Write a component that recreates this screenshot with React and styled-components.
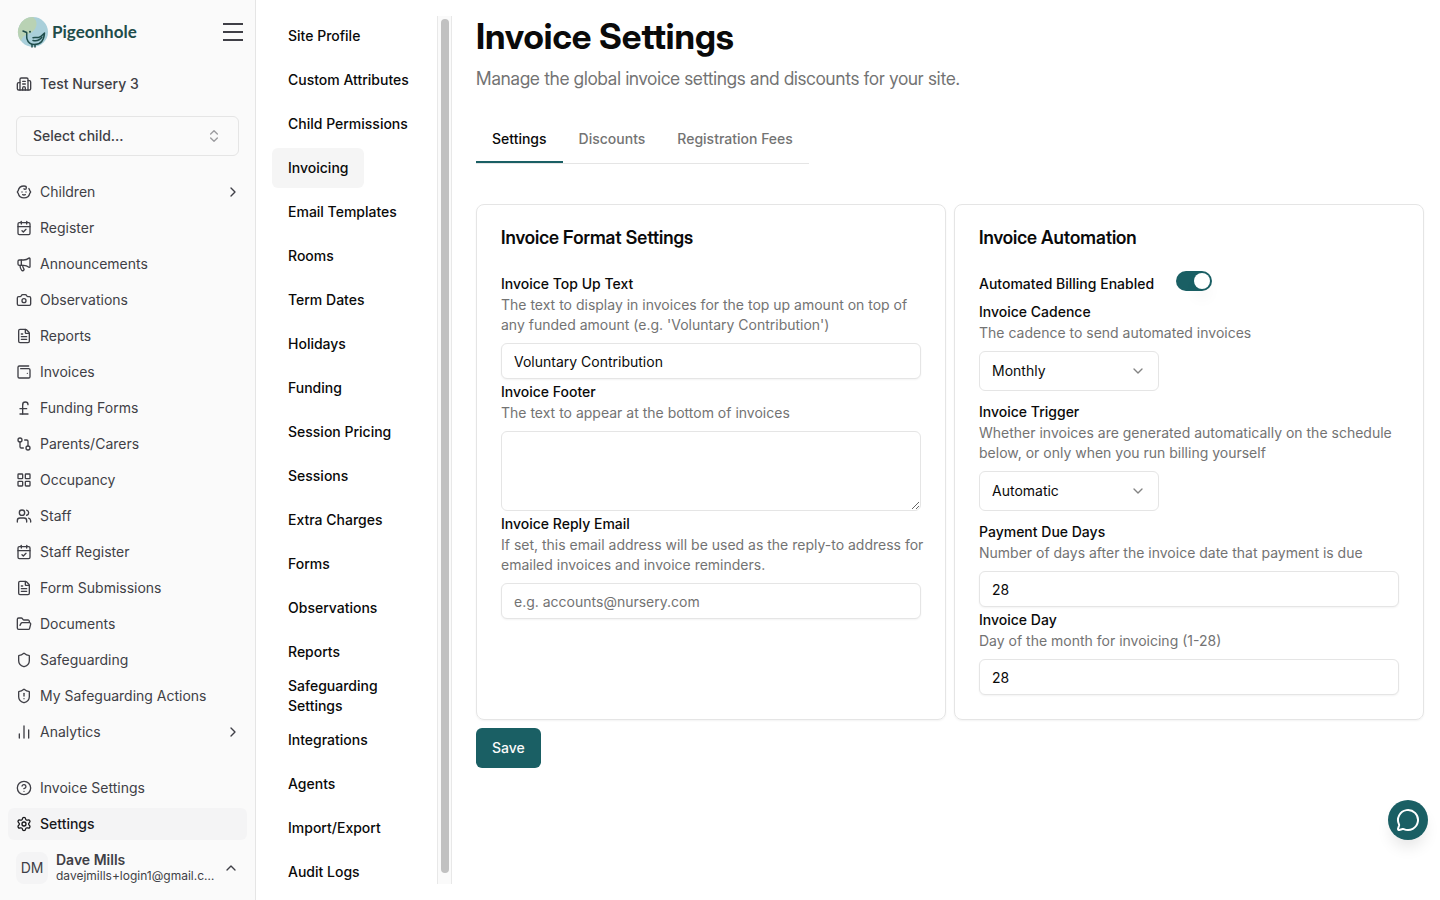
import React from "react";
import styled, { createGlobalStyle } from "styled-components";
import {
  Baby,
  Building2,
  CalendarCheck,
  Camera,
  ChartNoAxesColumn,
  ChevronDown,
  ChevronRight,
  ChevronUp,
  ChevronsUpDown,
  CircleHelp,
  FileText,
  FolderOpen,
  GitCompare,
  LayoutGrid,
  Megaphone,
  MessageCircle,
  PoundSterling,
  Settings,
  Shield,
  ShieldAlert,
  Users,
  WalletMinimal,
} from "lucide-react";

const navItems = [
  { label: "Children", icon: Baby, nested: true },
  { label: "Register", icon: CalendarCheck },
  { label: "Announcements", icon: Megaphone },
  { label: "Observations", icon: Camera },
  { label: "Reports", icon: FileText },
  { label: "Invoices", icon: WalletMinimal },
  { label: "Funding Forms", icon: PoundSterling },
  { label: "Parents/Carers", icon: GitCompare },
  { label: "Occupancy", icon: LayoutGrid },
  { label: "Staff", icon: Users },
  { label: "Staff Register", icon: CalendarCheck },
  { label: "Form Submissions", icon: FileText },
  { label: "Documents", icon: FolderOpen },
  { label: "Safeguarding", icon: Shield },
  { label: "My Safeguarding Actions", icon: ShieldAlert },
  { label: "Analytics", icon: ChartNoAxesColumn, nested: true },
];

const footerItems = [
  { label: "Invoice Settings", icon: CircleHelp },
  { label: "Settings", icon: Settings, active: true },
];

const settingsPages = [
  "Site Profile",
  "Custom Attributes",
  "Child Permissions",
  "Invoicing",
  "Email Templates",
  "Rooms",
  "Term Dates",
  "Holidays",
  "Funding",
  "Session Pricing",
  "Sessions",
  "Extra Charges",
  "Forms",
  "Observations",
  "Reports",
  "Safeguarding Settings",
  "Integrations",
  "Agents",
  "Import/Export",
  "Audit Logs",
];

const tabs = ["Settings", "Discounts", "Registration Fees"];

const LogoMark = () => (
  <svg width="32" height="32" viewBox="0 0 32 32" fill="none" aria-hidden="true">
    <circle cx="17" cy="16" r="15" fill="#a9cfda" />
    <path
      d="M17 1A15 15 0 0 0 5 25c1-4 3-5.500 6-6.500 5-1.500 9-5 9.500-10 .3-3-1-5.500-3.500-7.500z"
      fill="#b9d2b4"
    />
    <g stroke="#1f4d4b" strokeWidth="1.500" strokeLinecap="round" strokeLinejoin="round">
      <path d="M7 15l3.700 1.500c.2 2-.3 4.500.3 6.500 1 3.500 3.800 5.500 7.500 5.500 6 0 9.500-4.500 10-11.500-2 1.500-3 4-6 4.500-2 .3-3.500-.2-5.500.2" />
      <path d="M17 24.500c3.500.8 7-.5 9-3.500" />
      <path d="M16 28.500V31M19 28.500V31" />
    </g>
    <circle cx="14" cy="15.700" r="1" fill="#1f4d4b" />
  </svg>
);

const MenuIcon = () => (
  <svg width="24" height="24" viewBox="0 0 24 24" stroke="currentColor" strokeWidth="2" aria-hidden="true">
    <path d="M2 4h20M2 12h20M2 20h20" />
  </svg>
);

const NavLink = ({ label, icon: Icon, nested, active }) => (
  <NavItem href="#" $active={active}>
    <Icon size={16} />
    <span>{label}</span>
    {nested && <ChevronRight size={16} />}
  </NavItem>
);

const Sidebar = () => (
  <SidebarPanel>
    <SidebarHeader>
      <LogoRow>
        <Logo href="#">
          <LogoMark />
          Pigeonhole
        </Logo>
        <MenuButton type="button" aria-label="Toggle menu">
          <MenuIcon />
        </MenuButton>
      </LogoRow>
      <Site>
        <Building2 size={16} />
        Test Nursery 3
      </Site>
      <ChildPicker type="button">
        Select child...
        <ChevronsUpDown size={16} />
      </ChildPicker>
    </SidebarHeader>
    <NavList>
      {navItems.map((item) => (
        <NavLink key={item.label} {...item} />
      ))}
    </NavList>
    <SidebarFooter>
      <NavList>
        {footerItems.map((item) => (
          <NavLink key={item.label} {...item} />
        ))}
      </NavList>
      <UserButton type="button">
        <Avatar>DM</Avatar>
        <UserText>
          <strong>Dave Mills</strong>
          <small>davejmills+login1@gmail.com</small>
        </UserText>
        <ChevronUp size={16} />
      </UserButton>
    </SidebarFooter>
  </SidebarPanel>
);

const Field = ({ id, label, hint, spaced, children }) => (
  <FieldBox $spaced={spaced}>
    <Label htmlFor={id}>{label}</Label>
    <Hint>{hint}</Hint>
    {children}
  </FieldBox>
);

const Select = ({ id, options }) => (
  <SelectBox>
    <select id={id}>
      {options.map((option) => (
        <option key={option}>{option}</option>
      ))}
    </select>
    <ChevronDown size={16} />
  </SelectBox>
);

const App = () => {
  return (
    <>
      <GlobalStyle />
      <Layout>
        <Sidebar />
        <Page>
          <SettingsNav>
            <SettingsList>
              {settingsPages.map((page) => (
                <SettingsLink key={page} href="#" $active={page === "Invoicing"}>
                  {page}
                </SettingsLink>
              ))}
            </SettingsList>
            <ScrollTrack>
              <ScrollThumb />
            </ScrollTrack>
          </SettingsNav>
          <Content>
            <h1>Invoice Settings</h1>
            <Subtitle>Manage the global invoice settings and discounts for your site.</Subtitle>
            <Tabs role="tablist">
              {tabs.map((tab, i) => (
                <Tab key={tab} type="button" role="tab" aria-selected={i === 0} $active={i === 0}>
                  {tab}
                </Tab>
              ))}
            </Tabs>
            <form onSubmit={(e) => e.preventDefault()}>
              <Cards>
                <Card>
                  <h3>Invoice Format Settings</h3>
                  <Field
                    id="topUp"
                    label="Invoice Top Up Text"
                    hint="The text to display in invoices for the top up amount on top of any funded amount (e.g. 'Voluntary Contribution')"
                  >
                    <Input id="topUp" defaultValue="Voluntary Contribution" />
                  </Field>
                  <Field id="footer" label="Invoice Footer" hint="The text to appear at the bottom of invoices">
                    <TextArea id="footer" />
                  </Field>
                  <Field
                    id="replyEmail"
                    label="Invoice Reply Email"
                    hint="If set, this email address will be used as the reply-to address for emailed invoices and invoice reminders."
                  >
                    <Input id="replyEmail" type="email" placeholder="e.g. accounts@nursery.com" />
                  </Field>
                </Card>
                <Card>
                  <h3>Invoice Automation</h3>
                  <SwitchRow>
                    <Label htmlFor="billing">Automated Billing Enabled</Label>
                    <Switch id="billing" type="checkbox" role="switch" defaultChecked />
                  </SwitchRow>
                  <Field id="cadence" label="Invoice Cadence" hint="The cadence to send automated invoices" spaced>
                    <Select id="cadence" options={["Monthly", "Weekly"]} />
                  </Field>
                  <Field
                    id="trigger"
                    label="Invoice Trigger"
                    hint="Whether invoices are generated automatically on the schedule below, or only when you run billing yourself"
                    spaced
                  >
                    <Select id="trigger" options={["Automatic", "Manual"]} />
                  </Field>
                  <Field
                    id="dueDays"
                    label="Payment Due Days"
                    hint="Number of days after the invoice date that payment is due"
                  >
                    <Input id="dueDays" inputMode="numeric" defaultValue="28" />
                  </Field>
                  <Field id="day" label="Invoice Day" hint="Day of the month for invoicing (1-28)">
                    <Input id="day" inputMode="numeric" defaultValue="28" />
                  </Field>
                </Card>
              </Cards>
              <SaveButton type="submit">Save</SaveButton>
            </form>
          </Content>
        </Page>
        <ChatButton type="button" aria-label="Open chat">
          <MessageCircle size={24} />
        </ChatButton>
      </Layout>
    </>
  );
};

export default App;

const GlobalStyle = createGlobalStyle`
  * {
    box-sizing: border-box;
  }

  body {
    margin: 0;
    background-color: white;
    color: #0a0a0a;
    font-family: Inter, "Liberation Sans", sans-serif;
    font-size: 14px;
    line-height: 20px;
  }

  h1, h3, p {
    margin: 0;
  }

  a {
    color: inherit;
    text-decoration: none;
  }

  button, input, select, textarea {
    font: inherit;
    color: inherit;
  }

  button {
    border: none;
    background: none;
    padding: 0;
    cursor: pointer;
  }

  svg {
    flex-shrink: 0;
  }
`;

const Layout = styled.div`
  display: flex;
  height: 100vh;
`;

const SidebarPanel = styled.aside`
  width: 256px;
  flex-shrink: 0;
  display: flex;
  flex-direction: column;
  background-color: #fafafa;
  border-right: 1px solid #e5e5e5;
  color: #3f3f46;
`;

const SidebarHeader = styled.div`
  display: flex;
  flex-direction: column;
  padding: 16px 16px 20px;
`;

const LogoRow = styled.div`
  display: flex;
  align-items: center;
  justify-content: space-between;
  margin-right: -6px;
`;

const Logo = styled.a`
  display: flex;
  align-items: center;
  gap: 4px;
  color: #1f4d4b;
  font-family: Lato, sans-serif;
  font-size: 17px;
  font-weight: 700;
`;

const MenuButton = styled.button`
  display: flex;
`;

const Site = styled.div`
  display: flex;
  align-items: center;
  gap: 8px;
  height: 32px;
  margin: 20px 0 16px;
  font-weight: 500;
`;

const ChildPicker = styled.button`
  display: flex;
  align-items: center;
  justify-content: space-between;
  height: 40px;
  padding: 0 16px;
  border: 1px solid #e5e5e5;
  border-radius: 6px;
  font-weight: 500;

  svg {
    opacity: 0.5;
  }
`;

const NavList = styled.nav`
  display: flex;
  flex-direction: column;
  gap: 4px;
  padding: 0 8px;
`;

const NavItem = styled.a`
  display: flex;
  align-items: center;
  gap: 8px;
  height: 32px;
  padding: 0 8px;
  border-radius: 6px;
  background-color: ${({ $active }) => ($active ? "#f4f4f5" : "transparent")};
  color: ${({ $active }) => ($active ? "#18181b" : "inherit")};
  font-weight: ${({ $active }) => ($active ? 500 : 400)};

  span {
    flex: 1;
  }

  span + svg {
    margin-right: -2px;
  }
`;

const SidebarFooter = styled.div`
  margin-top: auto;
`;

const UserButton = styled.button`
  display: flex;
  align-items: center;
  gap: 8px;
  width: 100%;
  padding: 12px 16px 16px;
  text-align: left;
`;

const Avatar = styled.span`
  display: flex;
  align-items: center;
  justify-content: center;
  width: 32px;
  height: 32px;
  flex-shrink: 0;
  border-radius: 8px;
  background-color: #f4f4f5;
`;

const UserText = styled.span`
  flex: 1;
  min-width: 0;
  display: flex;
  flex-direction: column;

  strong {
    font-weight: 600;
    line-height: 16px;
  }

  small {
    font-size: 12px;
    line-height: 16px;
    overflow: hidden;
    white-space: nowrap;
    text-overflow: ellipsis;
  }
`;

const Page = styled.main`
  flex: 1;
  min-width: 0;
  display: flex;
  gap: 24px;
  padding: 16px;
`;

const SettingsNav = styled.nav`
  width: 180px;
  flex-shrink: 0;
  display: flex;
`;

const SettingsList = styled.div`
  flex: 1;
  display: flex;
  flex-direction: column;
  align-items: flex-start;
  gap: 4px;
  overflow-y: auto;
  scrollbar-width: none;
`;

const SettingsLink = styled.a`
  display: flex;
  align-items: center;
  height: 40px;
  flex-shrink: 0;
  padding: 0 16px;
  border-radius: 6px;
  background-color: ${({ $active }) => ($active ? "#f5f5f5" : "transparent")};
  font-weight: 500;
`;

const ScrollTrack = styled.div`
  width: 15px;
  display: flex;
  padding: 3px 2px 11px 3px;
  border: 1px solid #e8e8e8;
  border-width: 0 1px;
  background-color: #fafafa;
`;

const ScrollThumb = styled.div`
  flex: 1;
  border-radius: 4px;
  background-color: #c1c1c1;
`;

const Content = styled.section`
  flex: 1;
  min-width: 0;

  h1 {
    font-family: "Inter Display", Inter, sans-serif;
    font-size: 35px;
    font-weight: 700;
    line-height: 40px;
  }
`;

const Subtitle = styled.p`
  margin-top: 8px;
  color: #737373;
  font-family: "Inter Display", Inter, sans-serif;
  font-size: 18px;
  line-height: 30px;
`;

const Tabs = styled.div`
  display: flex;
  width: fit-content;
  margin: 22px 0 40px;
  border-bottom: 1px solid #e5e5e5;
`;

const Tab = styled.button`
  height: 47px;
  padding: 0 16px;
  border-bottom: 2px solid ${({ $active }) => ($active ? "#1a5f64" : "transparent")};
  color: ${({ $active }) => ($active ? "#0a0a0a" : "#737373")};
  font-weight: 500;
`;

const Cards = styled.div`
  display: grid;
  grid-template-columns: 1fr 1fr;
  gap: 8px;
  margin-bottom: 8px;
`;

const Card = styled.section`
  padding: 24px;
  border: 1px solid #e5e5e5;
  border-radius: 8px;
  box-shadow: 0 1px 2px rgba(0, 0, 0, 0.05);

  h3 {
    margin-bottom: 24px;
    font-family: "Inter Display", Inter, sans-serif;
    font-size: 18px;
    font-weight: 600;
    line-height: 18px;
  }
`;

const FieldBox = styled.div`
  display: flex;
  flex-direction: column;
  padding: 2px 0 ${({ $spaced }) => ($spaced ? "8px" : "0")};
`;

const Label = styled.label`
  font-weight: 500;
  line-height: 22px;
`;

const Hint = styled.p`
  margin: 0 -8px 8px 0;
  color: #737373;
`;

const Input = styled.input`
  width: 100%;
  height: 36px;
  padding: 0 12px;
  border: 1px solid #e5e5e5;
  border-radius: 6px;
  background-color: white;
  box-shadow: 0 1px 2px rgba(0, 0, 0, 0.05);

  &::placeholder {
    color: #737373;
  }
`;

const TextArea = styled.textarea`
  display: block;
  width: 100%;
  height: 80px;
  padding: 8px 12px;
  border: 1px solid #e5e5e5;
  border-radius: 6px;
  background-color: white;
  resize: vertical;
`;

const SelectBox = styled.div`
  position: relative;
  width: 180px;

  select {
    width: 100%;
    height: 40px;
    padding: 0 12px;
    border: 1px solid #e5e5e5;
    border-radius: 6px;
    background-color: white;
    appearance: none;
  }

  svg {
    position: absolute;
    top: 12px;
    right: 13px;
    opacity: 0.5;
    pointer-events: none;
  }
`;

const SwitchRow = styled.div`
  display: flex;
  align-items: flex-start;
  gap: 22px;
  height: 28px;

  label {
    padding-top: 2px;
  }
`;

const Switch = styled.input`
  display: flex;
  width: 36px;
  height: 20px;
  margin: 0;
  padding: 2px;
  border-radius: 10px;
  background-color: #e5e5e5;
  appearance: none;
  cursor: pointer;

  &::before {
    content: "";
    width: 16px;
    height: 16px;
    border-radius: 50%;
    background-color: white;
    box-shadow: 0 10px 15px -3px rgba(0, 0, 0, 0.1);
  }

  &:checked {
    justify-content: flex-end;
    background-color: #1a5f64;
  }
`;

const SaveButton = styled.button`
  height: 40px;
  padding: 0 16px;
  border-radius: 6px;
  background-color: #1a5f64;
  color: #fafafa;
  font-weight: 500;
`;

const ChatButton = styled.button`
  position: fixed;
  right: 12px;
  bottom: 60px;
  display: flex;
  align-items: center;
  justify-content: center;
  width: 40px;
  height: 40px;
  border-radius: 50%;
  background-color: #1a5f64;
  color: white;
  box-shadow: 0 10px 15px -3px rgba(0, 0, 0, 0.1);
`;
